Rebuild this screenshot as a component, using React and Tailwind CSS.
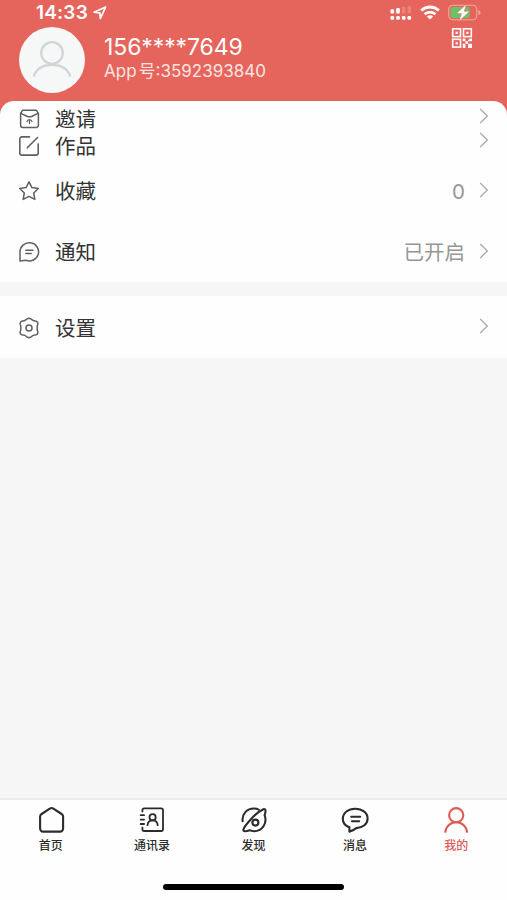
import React from "react";

const iconProps = {
  width: 22,
  height: 22,
  viewBox: "0 0 22 22",
  fill: "none",
  stroke: "currentColor",
  strokeWidth: 1.5,
  strokeLinecap: "round",
  strokeLinejoin: "round",
};

const tabIconProps = { ...iconProps, width: 28, height: 28, viewBox: "0 0 28 28", strokeWidth: 2.1 };

function InviteIcon() {
  return (
    <svg {...iconProps}>
      <path d="M4.6 2.2h13.6l2.2 3.2v11.8a2.2 2.2 0 0 1-2.2 2.2H4.8a2.2 2.2 0 0 1-2.2-2.2V5.400z" />
      <path d="M3 5.400l5.900 2.800c1.600.7 3.600.7 5.200 0L20 5.400" />
      <path d="M11.500 15.600v-3.400M9 13.700c.3-1.300 1.300-2 2.500-2s2.200.7 2.500 2" strokeWidth="1.3" />
    </svg>
  );
}

function WorksIcon() {
  return (
    <svg {...iconProps} strokeWidth={1.6}>
      <path d="M11.500 1.900H3.800a2 2 0 0 0-2 2v14.200a2 2 0 0 0 2 2h14.400a2 2 0 0 0 2-2V9" />
      <path d="M9.200 12.800L19.600 2.500" />
    </svg>
  );
}

function StarIcon() {
  return (
    <svg {...iconProps}>
      <path d="M11 1.800l2.900 5.800 6.400.9-4.600 4.500 1.100 6.400-5.800-3-5.800 3 1.100-6.400-4.600-4.500 6.400-.9z" />
    </svg>
  );
}

function NoticeIcon() {
  return (
    <svg {...iconProps}>
      <path d="M2 20V11a9.300 9.100 0 1 1 5.800 8.300z" />
      <path d="M7.800 9.200h7.200M7.800 12.600h5.400" />
    </svg>
  );
}

function SettingsIcon() {
  return (
    <svg {...iconProps}>
      <path d="M9.400 1.800Q11 .6 12.600 1.800Q15 4.100 18.200 4.200Q20.300 5 19.800 7.200Q18.400 11 19.800 14.800Q20.300 17 18.200 17.800Q15 17.900 12.600 20.200Q11 21.400 9.400 20.200Q7 17.900 3.800 17.800Q1.700 17 2.200 14.800Q3.600 11 2.200 7.200Q1.700 5 3.800 4.200Q7 4.100 9.400 1.800z" />
      <circle cx="11" cy="11" r="3" />
    </svg>
  );
}

function Chevron({ className }) {
  return (
    <svg
      className={`text-[#a9a9a9] ${className}`}
      width="10"
      height="16"
      viewBox="0 0 10 16"
      fill="none"
      stroke="currentColor"
      strokeWidth="1.3"
    >
      <path d="M1.200 1l7.200 7-7.200 7" />
    </svg>
  );
}

function HomeIcon() {
  return (
    <svg {...tabIconProps}>
      <path d="M12.800 2.600L4.600 8a2.800 2.800 0 0 0-1.500 2.500v12.100a3 3 0 0 0 3 3h17a3 3 0 0 0 3-3V10.500A2.800 2.800 0 0 0 24.600 8l-8.200-5.400a3.300 3.300 0 0 0-3.600 0z" />
    </svg>
  );
}

function ContactsIcon() {
  return (
    <svg {...tabIconProps} strokeWidth={1.8}>
      <path d="M4.400 5.500V4.200a1.800 1.800 0 0 1 1.800-1.800h17a1.800 1.800 0 0 1 1.800 1.800v19a1.800 1.800 0 0 1-1.800 1.800h-17a1.800 1.800 0 0 1-1.800-1.800v-1.600" />
      <path d="M2.700 9.200h3.400M2.700 13.600h3.400M2.700 18h3.400" />
      <circle cx="14.600" cy="11.300" r="3.100" />
      <path d="M9.500 19.200c.2-2.900 2.300-4.800 5.100-4.800s4.900 1.900 5.100 4.800" />
    </svg>
  );
}

function DiscoverIcon() {
  return (
    <svg {...tabIconProps}>
      <path d="M2.600 15.100C1.800 8 7 2.500 13.800 2.500c2 0 3.400.3 4.900 1.100" />
      <path d="M24.600 9.200c2.900 7.500-2 16-10.400 16-1.700 0-3.200-.3-4.500-1-3.800 1.400-6.800 1.500-6.300-.8C4 20.800 15 6.800 23.400 3.200c2.700-.8 2.500 2.400 1.200 6z" />
      <circle cx="15.400" cy="16.600" r="3" />
    </svg>
  );
}

function MessagesIcon() {
  return (
    <svg {...tabIconProps}>
      <path d="M8.400 25.600v-4.300C4.200 19.700 1.800 16.900 1.800 13 1.800 6.700 7.300 2.700 14.200 2.700S26.600 6.700 26.600 12.500c0 5.500-4.700 9.400-11.400 9.600-2 1.700-4 2.900-6.800 3.500z" />
      <path d="M10.200 10.700h9M11 15.300h7.200" />
    </svg>
  );
}

function PersonIcon() {
  return (
    <svg {...tabIconProps} strokeLinecap="butt">
      <circle cx="14.200" cy="9.200" r="7.100" />
      <path d="M3.200 26.600C3.600 20.500 8.400 16.300 14.200 16.300S24.800 20.500 25.200 26.600" />
    </svg>
  );
}

function StatusBar() {
  return (
    <div className="flex h-[25px] items-center justify-between pl-[36px] pr-[26px] text-white">
      <div className="flex items-center gap-[5px]">
        <span className="text-[19px] font-semibold leading-none tracking-[0.2px]">14:33</span>
        <svg width="14" height="14" viewBox="0 0 14 14" fill="none" stroke="currentColor" strokeWidth="1.8" strokeLinejoin="round">
          <path d="M12.600 1L1.200 6.200l5.600.7.600 5.600z" />
        </svg>
      </div>
      <div className="flex items-center gap-[8px]">
        <svg width="23" height="14" viewBox="0 0 23 14" fill="currentColor">
          <rect x="1.500" y="3.300" width="3.600" height="4.300" rx="1.200" />
          <rect x="7.200" y="2" width="3.600" height="5.600" rx="1.200" />
          <rect x="12.900" y=".8" width="3.600" height="6.800" rx="1.200" opacity=".18" />
          <rect x="18.500" y="0" width="3.600" height="7.600" rx="1.200" opacity=".18" />
          <rect x="1.500" y="10" width="3.600" height="3.800" rx="1.200" />
          <rect x="7.200" y="10" width="3.600" height="3.800" rx="1.200" />
          <rect x="12.900" y="10" width="3.600" height="3.800" rx="1.200" />
          <rect x="18.500" y="10" width="3.600" height="3.800" rx="1.200" />
        </svg>
        <svg width="20" height="15" viewBox="0 0 20 15" fill="none" stroke="currentColor" strokeWidth="2.8">
          <path d="M1.200 5.500c5-4.700 12.600-4.700 17.600 0" />
          <path d="M4.600 9.200c3-2.900 7.800-2.900 10.800 0" />
          <path d="M10 14.600l-3.200-3.200c1.800-1.500 4.600-1.500 6.400 0z" fill="currentColor" stroke="none" />
        </svg>
        <svg width="33" height="18" viewBox="0 0 33 18">
          <rect x=".8" y="1.200" width="28" height="14.600" rx="4.200" fill="none" stroke="#edaa9b" strokeWidth="1.1" />
          <rect x="2.700" y="3.100" width="19" height="10.800" rx="2.200" fill="#69c365" />
          <path d="M30.400 5.900v5.400c1.600-.8 2.200-1.700 2.200-2.700s-.6-1.900-2.200-2.700z" fill="#edaa9b" />
          <path d="M18.600 0L8.400 9.600h5.200L10.800 17.400 21.600 7.300h-5.400z" fill="#fff" stroke="#e5655c" strokeWidth=".5" />
        </svg>
      </div>
    </div>
  );
}

function QrIcon() {
  return (
    <svg width="22" height="22" viewBox="0 0 22 22" fill="none" stroke="white" strokeWidth="1.6">
      <rect x="1.700" y="1.800" width="7.800" height="7.800" />
      <rect x="12.500" y="1.800" width="7.800" height="7.800" />
      <rect x="1.700" y="12.300" width="7.800" height="7.800" />
      <g fill="white" stroke="none">
        <rect x="4.600" y="4.700" width="2.200" height="2.200" />
        <rect x="15.300" y="4.700" width="2.200" height="2.200" />
        <rect x="4.600" y="15.200" width="2.200" height="2.200" />
        <path d="M11.700 11.500h2.700v2.700h2.700v2.600h-2.700v2.400h-2.700v-2.400h2.700v-2.600h-2.700zM18.300 11.500H21v2.700h-3.900v-1.400h1.200zM17.100 16.800h3.900v4.100h-3.900zM11.700 19.200h2.700v1.700h-2.700z" />
      </g>
    </svg>
  );
}

function Header() {
  return (
    <div className="flex h-[76px] items-start pl-[19px] pr-[34px] text-white">
      <div className="mt-[2px] flex h-[66px] w-[66px] shrink-0 items-center justify-center rounded-full bg-[#f6f7f7]">
        <svg width="42" height="38" viewBox="0 0 42 38" fill="none" stroke="#cfd6d9" strokeWidth="2.2">
          <circle cx="21" cy="12" r="10.800" />
          <path d="M2.800 35.500C4.400 28.300 11.800 23.800 21 23.800s16.600 4.500 18.200 11.700" />
        </svg>
      </div>
      <div className="ml-[19px] flex-1 pt-[10px]">
        <p className="text-[23px] leading-[25px] tracking-[-0.1px]">156****7649</p>
        <p className="text-[17px] leading-[22px] text-[#fde4e0]">
          App<span className="ml-[2px]">号</span>:3592393840
        </p>
      </div>
      <div className="mt-[2px]">
        <QrIcon />
      </div>
    </div>
  );
}

function MenuRow({ icon, label, value, className, chevron = "mb-[3px]" }) {
  return (
    <div className={`flex items-center px-[18px] ${className}`}>
      <span className="text-[#606060]">{icon}</span>
      <span className="ml-[15px] mt-[2px] flex-1 text-[20.5px] leading-[26px] text-[#333]">{label}</span>
      {value && <span className="mr-[14px] mt-[2px] text-[20.5px] leading-[26px] text-[#969696]">{value}</span>}
      <Chevron className={chevron} />
    </div>
  );
}

const tabs = [
  { label: "首页", icon: <HomeIcon /> },
  { label: "通讯录", icon: <ContactsIcon /> },
  { label: "发现", icon: <DiscoverIcon /> },
  { label: "消息", icon: <MessagesIcon /> },
  { label: "我的", icon: <PersonIcon />, active: true },
];

function TabBar() {
  return (
    <div className="mt-auto h-[102px] border-t-2 border-[#ebebeb] bg-[#fefefe]">
      <div className="flex pt-[6px]">
        {tabs.map((tab) => (
          <div
            key={tab.label}
            className={`flex flex-1 flex-col items-center ${tab.active ? "text-[#df5b55]" : "text-[#2b2b2b]"}`}
          >
            {tab.icon}
            <span className="mt-[4px] text-[12px] font-medium leading-[16px]">{tab.label}</span>
          </div>
        ))}
      </div>
      <div className="mx-auto mt-[30px] h-[6px] w-[181px] rounded-full bg-black" />
    </div>
  );
}

export default function App() {
  return (
    <div className="flex h-[900px] w-[507px] flex-col overflow-hidden bg-[#f6f6f6] font-['Inter','Noto_Sans_CJK_SC',sans-serif]">
      <div className="bg-[#e5655c]">
        <StatusBar />
        <Header />
        <div className="rounded-t-[14px] bg-[#fefefe] pt-[4px]">
          <MenuRow icon={<InviteIcon />} label="邀请" className="h-[27px]" chevron="mb-[5px]" />
          <MenuRow icon={<WorksIcon />} label="作品" className="h-[28px]" chevron="mb-[12px]" />
          <MenuRow icon={<StarIcon />} label="收藏" value="0" className="h-[62px]" />
          <MenuRow icon={<NoticeIcon />} label="通知" value="已开启" className="h-[60px]" />
        </div>
      </div>
      <MenuRow icon={<SettingsIcon />} label="设置" className="mt-[14px] h-[62px] bg-[#fefefe] pt-px" chevron="mb-[4px]" />
      <TabBar />
    </div>
  );
}
